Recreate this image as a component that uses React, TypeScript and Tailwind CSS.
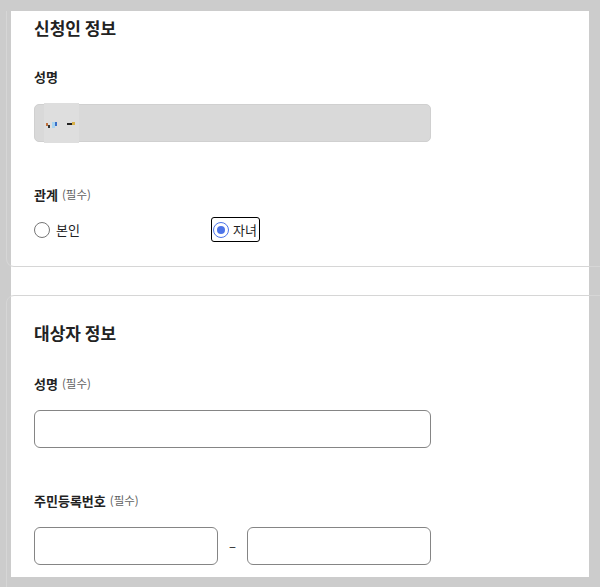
const font = { fontFamily: '"Noto Sans CJK KR", "Noto Sans", sans-serif' };

function Label({ text, required }: { text: string; required?: boolean }) {
  return (
    <div className="flex h-[18px] items-center gap-[4px]">
      <span className="text-[13px] font-bold text-[#222]">{text}</span>
      {required ? <span className="text-[11.5px] text-[#5f5f5f]">(필수)</span> : null}
    </div>
  );
}

function Radio({ label, checked }: { label: string; checked?: boolean }) {
  return (
    <label
      className={
        checked
          ? "flex h-[25px] items-center gap-[4px] rounded-[3px] border-[1.5px] border-black pl-[1px] pr-[2px]"
          : "flex h-[25px] items-center gap-[6px]"
      }
    >
      {checked ? (
        <span className="flex h-[16px] w-[16px] items-center justify-center rounded-full border-[1.5px] border-[#4d74e8] bg-white">
          <span className="h-[8px] w-[8px] rounded-full bg-[#4d74e8]" />
        </span>
      ) : (
        <span className="h-[16px] w-[16px] rounded-full border border-[#767676] bg-white" />
      )}
      <span className="text-[13px] text-[#222]">{label}</span>
    </label>
  );
}

export default function App() {
  return (
    <div className="h-[587px] overflow-hidden bg-[#cccccc] px-[11px] pt-[11px]" style={font}>
      <div className="h-[566px] bg-white">
        {/* 신청인 정보 */}
        <section className="-ml-[5px] -mr-[40px] h-[256px] rounded-b-[8px] border border-t-0 border-[#d6d6d6] pl-[27px] pt-[5px]">
          <h2 className="h-[24px] text-[17px] leading-[24px] font-bold text-[#222]">신청인 정보</h2>
          <div className="mt-[28px]">
            <Label text="성명" />
          </div>
          <div className="mt-[18px] flex h-[38px] w-[397px] items-center rounded-[5px] border border-[#d0d0d0] bg-[#d9d9d9]">
            <div className="ml-[9px] flex h-[40px] w-[35px] items-center bg-[#dedede] pl-[2px]">
              <span className="mt-[3px] h-[3px] w-[2px] bg-[#c0703a]" />
              <span className="mt-[6px] h-[3px] w-[2px] bg-[#333]" />
              <span className="ml-[2px] mt-[4px] h-[6px] w-[3px] bg-[#a8d4f0]" />
              <span className="mt-[1px] h-[4px] w-[2px] bg-[#3a70c8]" />
              <span className="ml-[10px] mt-[2px] h-[2px] w-[5px] bg-[#222]" />
              <span className="h-[3px] w-[3px] bg-[#d8b048]" />
            </div>
          </div>
          <div className="mt-[44px]">
            <Label text="관계" required />
          </div>
          <div className="mt-[13px] flex items-center">
            <div className="w-[177px]">
              <Radio label="본인" />
            </div>
            <Radio label="자녀" checked />
          </div>
        </section>

        {/* 대상자 정보 */}
        <section className="-ml-[5px] -mr-[40px] mt-[28px] h-[320px] rounded-t-[8px] border border-[#d6d6d6] pl-[27px] pt-[25px]">
          <h2 className="h-[24px] text-[17px] leading-[24px] font-bold text-[#222]">대상자 정보</h2>
          <div className="mt-[30px]">
            <Label text="성명" required />
          </div>
          <div className="mt-[17px] h-[38px] w-[397px] rounded-[6px] border border-[#858585] bg-white" />
          <div className="mt-[44px]">
            <Label text="주민등록번호" required />
          </div>
          <div className="mt-[17px] flex w-[397px] items-center">
            <div className="h-[38px] w-[184px] rounded-[6px] border border-[#858585] bg-white" />
            <span className="flex-1 text-center text-[13px] text-[#222]">–</span>
            <div className="h-[38px] w-[184px] rounded-[6px] border border-[#858585] bg-white" />
          </div>
        </section>
      </div>
    </div>
  );
}
